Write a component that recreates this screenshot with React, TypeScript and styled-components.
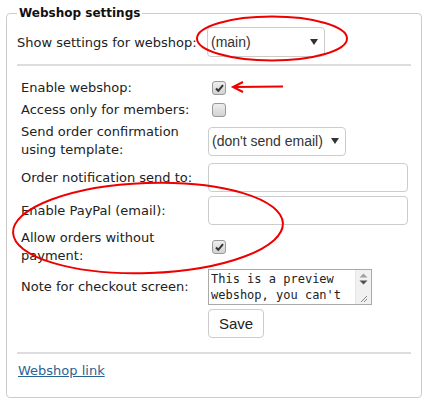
import React from "react";
import styled, { createGlobalStyle } from "styled-components";

const Global = createGlobalStyle`
  html, body { margin: 0; padding: 0; background: #fff; }
  body { font-family: "DejaVu Sans", Verdana, sans-serif; font-size: 13px; color: #222; }
`;

const Page = styled.div`
  position: relative;
  width: 432px;
  height: 402px;
  padding-top: 5px;
  box-sizing: border-box;
`;

const Fieldset = styled.fieldset`
  margin: 0 0 0 6px;
  width: 416px;
  box-sizing: border-box;
  border: 1px solid #ccc;
  border-radius: 4px;
  padding: 6px 10px 17px 10px;
  min-width: 0;
`;

const Legend = styled.legend`
  font-weight: bold;
  font-size: 12px;
  line-height: 16px;
  padding: 0 2px;
  margin-left: 0;
  color: #111;
`;

const TopRow = styled.div`
  display: flex;
  align-items: center;
`;

const TopLabel = styled.div`
  width: 190px;
`;

const Divider = styled.div<{ $mt: number }>`
  height: 2px;
  background: #ddd;
  margin-top: ${(p) => p.$mt}px;
`;

const Form = styled.div`
  display: flex;
  flex-direction: column;
  margin-top: 11px;
`;

const Row = styled.div`
  display: flex;
  align-items: center;
  padding: 2px 0;
`;

const Label = styled.div`
  width: 187px;
  padding-left: 4px;
  line-height: 18px;
`;

const SelectBox = styled.div<{ $w: number; $h: number }>`
  width: ${(p) => p.$w}px;
  height: ${(p) => p.$h}px;
  box-sizing: border-box;
  border: 1px solid #ccc;
  border-radius: 4px;
  display: flex;
  align-items: center;
  padding: 0 6px 0 3px;
  font-family: "Liberation Sans", Arial, sans-serif;
  font-size: 14px;
  color: #333;
  background: #fff;
`;

const SelectText = styled.span`
  flex: 1;
  white-space: nowrap;
`;

const Caret = styled.svg`
  flex: none;
`;

const TextInput = styled.input`
  width: 200px;
  height: 29px;
  box-sizing: border-box;
  border: 1px solid #ccc;
  border-radius: 4px;
  margin: 0;
  padding: 0 6px;
  font-size: 14px;
`;

const Check = styled.span`
  width: 12px;
  height: 12px;
  margin-left: 4px;
  border: 1px solid #999;
  border-radius: 3px;
  background: linear-gradient(#eee, #d2d2d2);
  display: inline-flex;
  align-items: center;
  justify-content: center;
`;

const NoteBox = styled.div`
  width: 164px;
  height: 36px;
  box-sizing: border-box;
  border: 1px solid #a9a9a9;
  display: flex;
  background: #fff;
`;

const TextArea = styled.textarea`
  flex: 1;
  min-width: 0;
  height: 100%;
  box-sizing: border-box;
  margin: 0;
  border: 0;
  outline: none;
  padding: 1px 2px;
  font-family: "DejaVu Sans Mono", "Liberation Mono", monospace;
  font-size: 12px;
  line-height: 16px;
  color: #222;
  overflow: hidden;
  resize: none;
`;

const ScrollTrack = styled.div`
  width: 16px;
  flex: none;
  background: #f1f1f1;
  border-left: 1px solid #e6e6e6;
  display: flex;
  flex-direction: column;
  align-items: center;
  justify-content: space-between;
  padding: 3px 0 1px;
  box-sizing: border-box;
`;

const Button = styled.button`
  height: 29px;
  padding: 0 10px;
  border: 1px solid #ccc;
  border-radius: 4px;
  background: #fff;
  font-family: "Liberation Sans", Arial, sans-serif;
  font-size: 15px;
  color: #222;
`;

const Spacer = styled.div`
  width: 191px;
`;

const Link = styled.a`
  display: inline-block;
  margin-top: 8px;
  margin-left: 1px;
  line-height: 18px;
  color: #2a6496;
  text-decoration: underline;
`;

const Annotations = styled.svg`
  position: absolute;
  left: 0;
  top: 0;
  pointer-events: none;
`;

const CheckMark = () => (
  <svg width="9" height="8" viewBox="0 0 9 8">
    <path d="M1 4.5 L3.3 6.8 L8 1.2" stroke="#333" strokeWidth="2" fill="none" />
  </svg>
);

const CaretIcon = () => (
  <Caret width="8" height="6" viewBox="0 0 8 6">
    <path d="M0 0 H8 L4 6 Z" fill="#333" />
  </Caret>
);

export default function App() {
  return (
    <Page>
      <Global />
      <Fieldset>
        <Legend>Webshop settings</Legend>
        <TopRow>
          <TopLabel>Show settings for webshop:</TopLabel>
          <SelectBox $w={118} $h={30}>
            <SelectText>(main)</SelectText>
            <CaretIcon />
          </SelectBox>
        </TopRow>
        <Divider $mt={7} />
        <Form>
          <Row>
            <Label>Enable webshop:</Label>
            <Check><CheckMark /></Check>
          </Row>
          <Row>
            <Label>Access only for members:</Label>
            <Check />
          </Row>
          <Row>
            <Label>Send order confirmation using template:</Label>
            <SelectBox $w={138} $h={29}>
              <SelectText>(don't send email)</SelectText>
              <CaretIcon />
            </SelectBox>
          </Row>
          <Row>
            <Label>Order notification send to:</Label>
            <TextInput />
          </Row>
          <Row>
            <Label>Enable PayPal (email):</Label>
            <TextInput />
          </Row>
          <Row>
            <Label>Allow orders without payment:</Label>
            <Check><CheckMark /></Check>
          </Row>
          <Row>
            <Label>Note for checkout screen:</Label>
            <NoteBox>
              <TextArea defaultValue={"This is a preview webshop, you can't place real orders."} />
              <ScrollTrack>
                <svg width="9" height="12" viewBox="0 0 9 12">
                  <path d="M0.5 4.5 L4.5 0.5 L8.5 4.5 Z" fill="#a0a0a0" />
                  <path d="M0.5 7.5 L4.5 11.5 L8.5 7.5 Z" fill="#505050" />
                </svg>
                <svg width="8" height="8" viewBox="0 0 8 8">
                  <path d="M7 1 L1 7 M7 4 L4 7" stroke="#888" strokeWidth="1" />
                </svg>
              </ScrollTrack>
            </NoteBox>
          </Row>
          <Row>
            <Spacer />
            <Button>Save</Button>
          </Row>
        </Form>
        <Divider $mt={12} />
        <Link href="#">Webshop link</Link>
      </Fieldset>
      <Annotations width="432" height="402" viewBox="0 0 432 402">
        <ellipse cx="272" cy="38.5" rx="75" ry="22" fill="none" stroke="#e00" strokeWidth="2" />
        <ellipse cx="148" cy="228" rx="135" ry="45" fill="none" stroke="#e00" strokeWidth="2" transform="rotate(-2 148 228)" />
        <path d="M283 86.5 L234 87 M243 82 L233 87 L243 92" fill="none" stroke="#e00" strokeWidth="2" />
      </Annotations>
    </Page>
  );
}
